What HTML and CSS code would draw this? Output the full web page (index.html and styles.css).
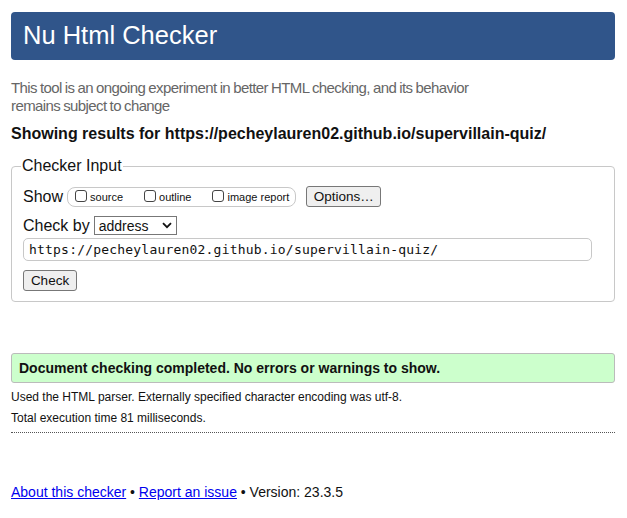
FILE: index.html
```html
<!DOCTYPE html>
<html>
<head>
<meta charset="utf-8">
<link rel="stylesheet" href="styles.css">
</head>
<body>
<h1 class="title">Nu Html Checker</h1>
<p class="intro">This tool is an ongoing experiment in better HTML checking, and its behavior remains subject to change</p>
<p class="showing">Showing results for https://pecheylauren02.github.io/supervillain-quiz/</p>
<fieldset class="input">
  <legend>Checker Input</legend>
  <div class="row row-show">
    <span class="lbl">Show</span>
    <span class="opts">
      <label class="opt"><span class="cb"></span>source</label>
      <label class="opt"><span class="cb"></span>outline</label>
      <label class="opt"><span class="cb"></span>image report</label>
    </span>
    <span class="btn options">Options…</span>
  </div>
  <div class="row row-by">
    <span class="lbl">Check by</span>
    <span class="select">address<svg width="10" height="7" viewBox="0 0 10 7"><path d="M1 1.2 L5 5.2 L9 1.2" fill="none" stroke="#111" stroke-width="1.8"/></svg></span>
  </div>
  <div class="url">https://pecheylauren02.github.io/supervillain-quiz/</div>
  <div class="row row-check"><span class="btn check">Check</span></div>
</fieldset>
<div class="success">Document checking completed. No errors or warnings to show.</div>
<p class="details">Used the HTML parser. Externally specified character encoding was utf-8.</p>
<p class="details">Total execution time 81 milliseconds.</p>
<hr class="dots">
<p class="footer"><a href="#">About this checker</a> • <a href="#">Report an issue</a> • Version: 23.3.5</p>
</body>
</html>
```
FILE: styles.css
```css
html, body { margin: 0; padding: 0; background: #fff; }
body {
  padding: 12px 12px 0 11px;
  font-family: "Liberation Sans", Arial, sans-serif;
  color: #111;
}
.title {
  margin: 0;
  height: 48px;
  box-sizing: border-box;
  padding: 9px 12px 0;
  background: #30558a;
  color: #fff;
  border-radius: 4px;
  font-weight: normal;
  font-size: 25.5px;
  line-height: 29px;
}
.intro {
  margin: 19px 0 0;
  max-width: 480px;
  color: #666;
  font-size: 15px;
  letter-spacing: -0.6px;
  word-spacing: -0.5px;
  line-height: 18px;
}
.showing {
  margin: 10px 0 0;
  font-weight: bold;
  font-size: 16px;
  line-height: 18px;
}
.input {
  margin: 14px 0 0;
  padding: 0 11px 10px;
  border: 1px solid #c8c8c8;
  border-radius: 4px;
  min-width: 0;
}
.input legend {
  padding: 0 1px;
  font-size: 16px;
  line-height: 18px;
  margin-left: -2px;
}
.row {
  display: flex;
  align-items: center;
}
.row-show { margin-top: 11px; height: 21px; }
.row-by { margin-top: 9px; height: 19px; }
.row-check { margin-top: 9px; height: 21px; }
.lbl { font-size: 16px; line-height: 20px; margin-right: 3px; white-space: nowrap; }
.opts {
  display: flex;
  align-items: center;
  flex: none;
  height: 20px;
  box-sizing: border-box;
  border: 1px solid #c8c8c8;
  border-radius: 8px;
  padding: 0 6px 0 7px;
  margin-left: 1px;
  margin-right: 10px;
}
.opt {
  display: flex;
  align-items: center;
  white-space: nowrap;
  font-size: 11px;
  color: #111;
  margin-right: 21px;
}
.opt:last-child { margin-right: 0; }
.cb {
  width: 12px;
  height: 12px;
  box-sizing: border-box;
  border: 1px solid #444;
  border-radius: 3px;
  margin-right: 3px;
  margin-top: -2px;
}
.btn {
  display: inline-flex;
  align-items: center;
  flex: none;
  box-sizing: border-box;
  height: 21px;
  padding: 0 7px;
  border: 1px solid #777;
  border-radius: 3px;
  background: #efefef;
  font-size: 13.5px;
  white-space: nowrap;
}
.options { width: 75px; justify-content: center; }
.select {
  display: inline-flex;
  align-items: center;
  justify-content: space-between;
  box-sizing: border-box;
  width: 83px;
  height: 19px;
  border: 1px solid #777;
  padding: 0 4px 0 4px;
  font-size: 14px;
  margin-left: 1px;
}
.url {
  margin-top: 3px;
  box-sizing: border-box;
  width: 569px;
  height: 23px;
  border: 1px solid #c8c8c8;
  border-radius: 5px;
  padding: 0 5px;
  font-family: "DejaVu Sans Mono", monospace;
  font-size: 13px;
  line-height: 21px;
  letter-spacing: 0.2px;
}
.check { width: 54px; justify-content: center; }
.success {
  margin-top: 51px;
  height: 30px;
  box-sizing: border-box;
  padding: 0 7px;
  background: #ccffcc;
  border: 1px solid #bbb;
  border-radius: 3px;
  font-weight: bold;
  font-size: 14px;
  line-height: 28px;
}
.details {
  margin: 7px 0 0;
  font-size: 12px;
  line-height: 14px;
}
.details + .details { margin-top: 7px; }
.dots {
  margin: 7px 0 0;
  border: 0;
  border-top: 1px dotted #555;
  height: 0;
}
.footer {
  margin: 50px 0 0;
  font-size: 14px;
  line-height: 18px;
}
.footer a { color: #00e; }
```
